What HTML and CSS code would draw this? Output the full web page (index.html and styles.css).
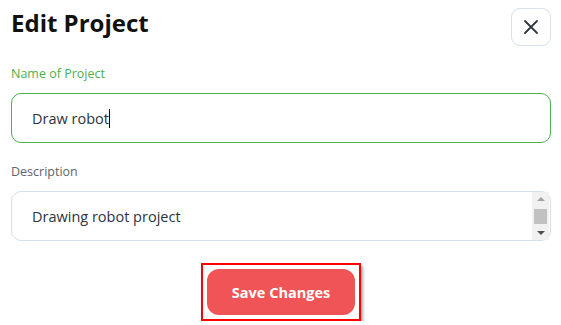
FILE: index.html
```html
<!DOCTYPE html>
<html lang="en">
<head>
<meta charset="utf-8">
<title>Edit Project</title>
<link rel="stylesheet" href="styles.css">
</head>
<body>
<div class="modal">
  <div class="header">
    <h1 class="title">Edit Project</h1>
    <button class="close" aria-label="Close">
      <svg width="16" height="16" viewBox="0 0 16 16"><path d="M2 2L14 14M14 2L2 14" stroke="#2f3640" stroke-width="1.8" stroke-linecap="round" fill="none"/></svg>
    </button>
  </div>
  <label class="label label-active">Name of Project</label>
  <div class="field field-active"><span class="value">Draw robot</span><span class="caret"></span></div>
  <label class="label label-desc">Description</label>
  <div class="field area">
    <span class="value">Drawing robot project</span>
    <div class="scrollbar">
      <span class="arrow arrow-up"></span>
      <span class="thumb"></span>
      <span class="arrow arrow-down"></span>
    </div>
  </div>
  <div class="actions">
    <div class="highlight">
      <button class="save">Save Changes</button>
    </div>
  </div>
</div>
</body>
</html>
```
FILE: styles.css
```css
html, body {
  margin: 0;
  padding: 0;
  background: #ffffff;
}
body {
  font-family: "Open Sans", "Liberation Sans", sans-serif;
  color: #222;
}
.modal {
  padding: 8px 10px 0 11px;
  display: flex;
  flex-direction: column;
}
.header {
  display: flex;
  justify-content: space-between;
  align-items: flex-start;
}
.title {
  margin: 0;
  font-size: 24px;
  font-weight: 700;
  line-height: 30px;
  color: #111;
}
.close {
  width: 40px;
  height: 38px;
  border: 1px solid #d8e0ea;
  border-radius: 9px;
  background: #fff;
  display: flex;
  align-items: center;
  justify-content: center;
  padding: 0;
}
.label {
  font-size: 12.5px;
  line-height: 18px;
  color: #5f6368;
  margin-top: 19px;
  margin-bottom: 10px;
}
.label-active {
  color: #4caf50;
}
.label-desc {
  margin-top: 20px;
  margin-bottom: 10px;
}
.field {
  position: relative;
  box-sizing: border-box;
  height: 50px;
  border: 1px solid #d6deea;
  border-radius: 10px;
  padding: 0 20px;
  font-size: 14.5px;
  color: #2c3440;
  display: flex;
  align-items: center;
  background: #fff;
}
.field-active {
  border-color: #4caf50;
}
.caret {
  display: inline-block;
  width: 1px;
  height: 19px;
  background: #111;
}
.area {
  padding-top: 1px;
}
.scrollbar {
  position: absolute;
  top: 0;
  bottom: 0;
  right: 1px;
  width: 17px;
  background: #f1f1f1;
  display: flex;
  flex-direction: column;
  align-items: center;
  justify-content: space-between;
  padding: 5px 0;
  box-sizing: border-box;
}
.arrow {
  width: 0;
  height: 0;
  border-left: 4px solid transparent;
  border-right: 4px solid transparent;
}
.arrow-up {
  border-bottom: 4px solid #a3a3a3;
}
.arrow-down {
  border-top: 4px solid #505050;
}
.thumb {
  width: 13px;
  height: 15px;
  background: #c1c1c1;
}
.actions {
  display: flex;
  justify-content: center;
  margin-top: 22px;
}
.highlight {
  border: 2px solid #ff0000;
  padding: 4px;
  box-shadow: 2px 3px 3px rgba(0,0,0,0.35);
}
.save {
  width: 148px;
  height: 46px;
  border: none;
  border-radius: 12px;
  background: #f05456;
  color: #fff;
  font-family: inherit;
  font-weight: 700;
  font-size: 14.5px;
  padding: 0;
}
```
